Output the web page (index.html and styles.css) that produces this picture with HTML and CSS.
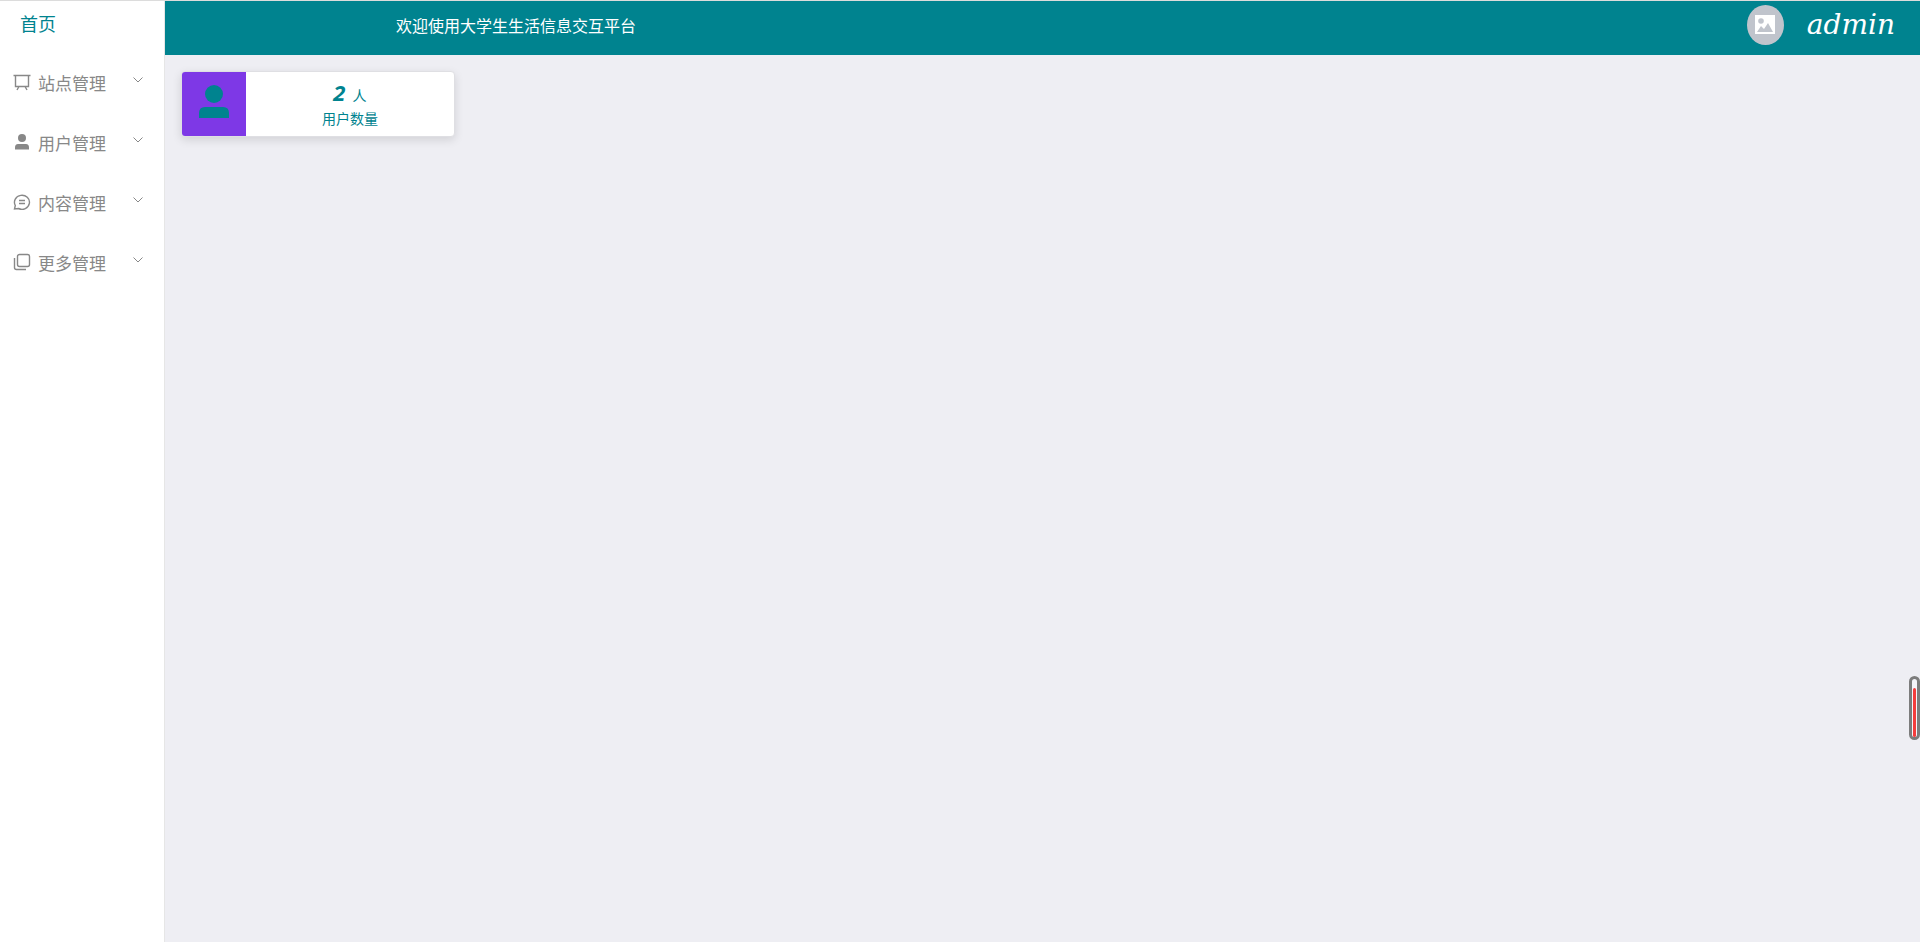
FILE: index.html
```html
<!DOCTYPE html>
<html lang="zh-CN">
<head>
    <meta charset="UTF-8">
    <meta name="viewport" content="width=device-width, initial-scale=1.0">
    <title>大学生生活信息交互平台</title>
    <link rel="stylesheet" href="styles.css">
</head>
<body>
    <aside class="sidebar">
        <a class="home" href="#">首页</a>
        <nav class="menu">
            <button class="menu-item" type="button">
                <svg class="menu-icon" viewBox="0 0 18 18" fill="none" stroke="currentColor"><path d="M.5 2.500h17M2.500 3v10.500h13V3M6 13.500l-2 3.500M12 13.500l2 3.500" stroke-width="1.400"/></svg>
                <span>站点管理</span>
                <svg class="arrow" viewBox="0 0 10 6" fill="none" stroke="currentColor"><path d="M.5.5 5 5 9.500.5"/></svg>
            </button>
            <button class="menu-item" type="button">
                <svg class="menu-icon" viewBox="0 0 18 18" fill="currentColor"><circle cx="9" cy="5" r="4"/><path d="M2 16.500v-2q0-3.500 3-3.500h8q3 0 3 3.500v2z"/></svg>
                <span>用户管理</span>
                <svg class="arrow" viewBox="0 0 10 6" fill="none" stroke="currentColor"><path d="M.5.5 5 5 9.500.5"/></svg>
            </button>
            <button class="menu-item" type="button">
                <svg class="menu-icon" viewBox="0 0 18 18" fill="none" stroke="currentColor"><path d="M1.500 16 2.300 12.500A7.500 7 0 1 1 5.500 15.500zM6 7.500h6M6 10.500h6" stroke-width="1.400"/></svg>
                <span>内容管理</span>
                <svg class="arrow" viewBox="0 0 10 6" fill="none" stroke="currentColor"><path d="M.5.5 5 5 9.500.5"/></svg>
            </button>
            <button class="menu-item" type="button">
                <svg class="menu-icon" viewBox="0 0 18 18" fill="none" stroke="currentColor" stroke-width="1.400"><rect x="4.500" y="1.500" width="12" height="12" rx="2"/><path d="M1.500 5v9.500q0 2 2 2H13"/></svg>
                <span>更多管理</span>
                <svg class="arrow" viewBox="0 0 10 6" fill="none" stroke="currentColor"><path d="M.5.5 5 5 9.500.5"/></svg>
            </button>
        </nav>
    </aside>

    <div class="container">
        <header class="header">
            <span class="welcome">欢迎使用大学生生活信息交互平台</span>
            <a class="user" href="#">
                <span class="avatar">
                    <svg viewBox="0 0 20 20"><path fill="#fff" d="M0 0h20v19H0z"/><circle cx="6" cy="6" r="2.800" fill="#c0c4cc"/><path fill="#c0c4cc" d="m2 17 4-6 3 3 4-6 5 9z"/></svg>
                </span>
                <span class="name">admin</span>
            </a>
        </header>

        <main class="main">
            <section class="card">
                <div class="card-icon">
                    <svg viewBox="0 0 30 33" fill="currentColor"><circle cx="15" cy="9" r="9"/><path d="M0 33v-5q0-6 6-6h18q6 0 6 6v5z"/></svg>
                </div>
                <div class="card-text">
                    <div class="count"><strong>2</strong> 人</div>
                    <div class="caption">用户数量</div>
                </div>
            </section>
        </main>
    </div>

    <!-- 右侧悬浮滚动指示 -->
    <div class="indicator"><div class="indicator-bar"></div></div>
</body>
</html>
```
FILE: styles.css
```css
* {
    box-sizing: border-box;
}
body {
    margin: 0;
    min-height: 100vh;
    display: flex;
    border-top: 1px solid #dcdcdc;
    background: #eeeef3;
    color: #00838f;
    font-family: "Noto Sans CJK SC", sans-serif;
}
a {
    color: inherit;
    text-decoration: none;
}
.sidebar {
    flex: none;
    width: 165px;
    background: #fff;
    border-right: 1px solid #e6e6e6;
}
.home {
    display: block;
    height: 51px;
    padding-left: 20px;
    font-size: 18px;
    line-height: 44px;
}
.menu-item {
    display: flex;
    align-items: center;
    width: 100%;
    height: 60px;
    padding: 0 20px 0 13px;
    border: none;
    background: none;
    color: #888;
    font-family: inherit;
    font-size: 17px;
    cursor: pointer;
}
.menu-icon {
    width: 18px;
    height: 18px;
    margin-right: 7px;
}
.arrow {
    width: 10px;
    height: 6px;
    margin: 0 1px 4px auto;
}
.container {
    flex: 1;
    min-width: 0;
}
.header {
    display: flex;
    align-items: center;
    justify-content: space-between;
    height: 54px;
    padding: 0 25px 7px 231px;
    background: #00838f;
    color: #fff;
}
.welcome {
    font-size: 16px;
}
.user {
    display: flex;
    align-items: center;
    gap: 23px;
}
.avatar {
    display: flex;
    align-items: center;
    justify-content: center;
    width: 37px;
    height: 40px;
    border-radius: 50%;
    background: #c0c4cc;
}
.avatar svg {
    width: 20px;
    height: 20px;
}
.name {
    font-family: "Lucida Handwriting", "DejaVu Serif", serif;
    font-size: 28px;
    font-style: italic;
    line-height: 40px;
}
.main {
    padding: 16px;
}
.card {
    display: flex;
    width: 274px;
    height: 66px;
    border: 1px solid #dfdfe3;
    border-radius: 4px;
    background: #fff;
    box-shadow: 0 3px 10px rgba(0, 0, 0, 0.12);
    overflow: hidden;
}
.card-icon {
    display: flex;
    justify-content: center;
    width: 64px;
    padding-top: 13px;
    background: #7e38e6;
}
.card-icon svg {
    width: 30px;
    height: 33px;
}
.card-text {
    flex: 1;
    padding-top: 7px;
    text-align: center;
}
.count {
    font-size: 14px;
    line-height: 26px;
}
.count strong {
    margin-right: 4px;
    font-family: "Noto Sans", sans-serif;
    font-size: 22px;
    font-style: italic;
    font-weight: 700;
}
.caption {
    font-size: 14px;
    line-height: 20px;
}
.indicator {
    position: fixed;
    right: 0;
    top: 676px;
    width: 11px;
    height: 64px;
    padding: 9px 1px 0;
    border: 3px solid #7c7c7c;
    border-radius: 6px;
    background: #f5f5fa;
}
.indicator-bar {
    height: 49px;
    border-radius: 2px;
    background: #f43c3c;
}
```
